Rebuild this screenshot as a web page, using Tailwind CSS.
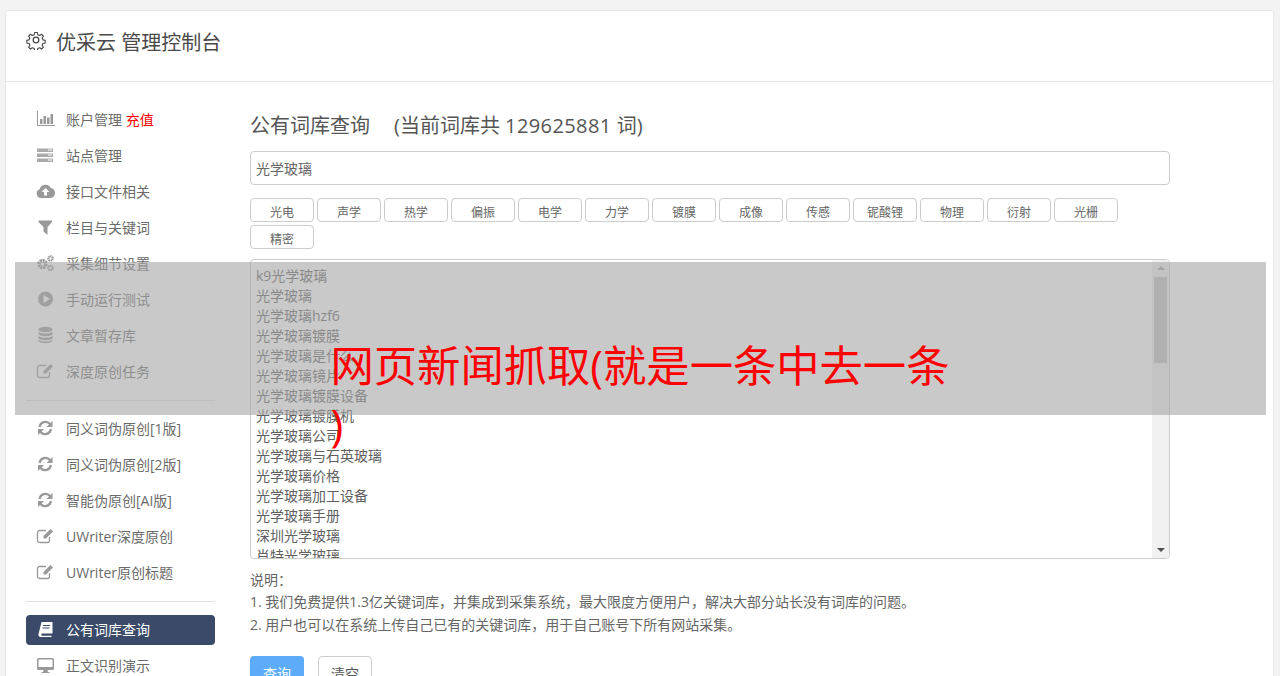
<!DOCTYPE html>
<html lang="zh">
<head>
<meta charset="utf-8">
<script src="https://cdn.jsdelivr.net/npm/@tailwindcss/browser@4"></script>
</head>
<body class="h-[676px] overflow-hidden bg-[#f3f3f3] font-['Open_Sans','Noto_Sans_CJK_SC',sans-serif] text-[14px] text-[#6b6b6b]">
<div class="relative h-[676px] overflow-hidden pl-[5px] pr-[6px] pt-[10px]">
  <div class="h-[800px] rounded-[3px] border border-[#e7e7e7] bg-white">
    <header class="flex h-[71px] items-start gap-[10px] border-b border-[#e5e5e5] pl-[20px] pt-[20px] text-[20px] leading-[24px] text-[#4a4a4a]">
      <svg class="mt-[-1px] h-[20px] w-[20px]" viewBox="0 0 24 24" fill="none" stroke="#444" stroke-width="1.500" stroke-linejoin="round"><circle cx="12" cy="12" r="3.400"/><path d="M10.200 2h3.600l.6 3 2.400 1 2.600-1.700 2.500 2.500-1.700 2.600 1 2.400 3 .6v3.600l-3 .6-1 2.400 1.700 2.600-2.500 2.500-2.600-1.700-2.400 1-.6 3h-3.600l-.6-3-2.400-1-2.600 1.700-2.500-2.500 1.700-2.600-1-2.400-3-.6v-3.600l3-.6 1-2.400-1.700-2.600 2.500-2.500 2.600 1.700 2.400-1z" transform="translate(1.200 1.200) scale(.9)"/></svg>
      <span>优采云 管理控制台</span>
    </header>
    <div class="flex">
      <nav class="w-[210px] shrink-0 pl-[20px] pr-[1px] pt-[20px]">
        <ul class="flex flex-col gap-[6px] py-[3px]">
          <li class="flex h-[30px] items-center rounded-[4px] pb-[2px] pl-[10px]"><svg class="mr-[11px] h-[18px] w-[19px]" viewBox="0 0 19 18" fill="#999"><path d="M1 1h1v14h17v1H1z"/><rect x="4" y="9" width="2.500" height="5"/><rect x="7.500" y="6" width="2.500" height="8"/><rect x="11" y="7.500" width="2.500" height="6.500"/><rect x="14.500" y="4" width="2.500" height="10"/></svg><span>账户管理 <span class="text-[#f00]">充值</span></span></li>
          <li class="flex h-[30px] items-center rounded-[4px] pb-[2px] pl-[10px]"><svg class="mr-[11px] h-[18px] w-[19px]" viewBox="0 0 19 18" fill="#aaa"><rect x="1" y="2.500" width="16" height="3.500"/><rect x="1" y="7.500" width="16" height="3.500"/><rect x="1" y="12.500" width="16" height="3.500"/><rect x="12" y="3.500" width="4" height="1" fill="#fff"/><rect x="12" y="8.500" width="4" height="1" fill="#fff"/><rect x="12" y="13.500" width="4" height="1" fill="#fff"/></svg><span>站点管理</span></li>
          <li class="flex h-[30px] items-center rounded-[4px] pb-[2px] pl-[10px]"><svg class="mr-[11px] h-[18px] w-[19px]" viewBox="0 0 19 18"><path fill="#999" d="M5 16a4.500 4.500 0 0 1-1.400-8.700A6 6 0 0 1 14.700 6a5.100 5.100 0 0 1 .3 10z"/><path fill="#fff" d="M9.500 6l4 4h-2.500v3.500H8V10H5.500z"/></svg><span>接口文件相关</span></li>
          <li class="flex h-[30px] items-center rounded-[4px] pb-[2px] pl-[10px]"><svg class="mr-[11px] h-[18px] w-[19px]" viewBox="0 0 19 18" fill="#999"><path d="M2.500 2.500h13.500v1.500L11.500 9v8l-4-3.500V9L2.500 4z"/></svg><span>栏目与关键词</span></li>
          <li class="flex h-[30px] items-center rounded-[4px] pb-[2px] pl-[10px]"><svg class="mr-[11px] h-[18px] w-[19px]" viewBox="0 0 19 18" fill="none" stroke="#999"><circle cx="6.500" cy="10" r="3.400" stroke-width="3.600" stroke-dasharray="2 .6"/><circle cx="14.500" cy="4.500" r="2.200" stroke-width="2.200" stroke-dasharray="1.300 .5"/><circle cx="14.500" cy="14" r="2.200" stroke-width="2.200" stroke-dasharray="1.300 .5"/></svg><span>采集细节设置</span></li>
          <li class="flex h-[30px] items-center rounded-[4px] pb-[2px] pl-[10px]"><svg class="mr-[11px] h-[18px] w-[19px]" viewBox="0 0 19 18"><circle cx="9.500" cy="9" r="7.500" fill="#999"/><path fill="#fff" d="M7.500 5L14 9l-6.500 4z"/></svg><span>手动运行测试</span></li>
          <li class="flex h-[30px] items-center rounded-[4px] pb-[2px] pl-[10px]"><svg class="mr-[11px] h-[18px] w-[19px]" viewBox="0 0 19 18" fill="#999"><ellipse cx="9.500" cy="3.500" rx="7" ry="2.800"/><path d="M2.500 5.300c1 3 13 3 14 0v2.700c-1 3-13 3-14 0z"/><path d="M2.500 9.500c1 3 13 3 14 0v2.400c-1 3-13 3-14 0z"/><path d="M2.500 13.300c1 3 13 3 14 0v1.200c-1 3.500-13 3.500-14 0z"/></svg><span>文章暂存库</span></li>
          <li class="flex h-[30px] items-center rounded-[4px] pb-[2px] pl-[10px]"><svg class="mr-[11px] h-[18px] w-[19px]" viewBox="0 0 19 18"><path fill="none" stroke="#999" stroke-width="1.300" d="M13.500 10v3.500a2 2 0 0 1-2 2h-8a2 2 0 0 1-2-2v-8a2 2 0 0 1 2-2H10"/><path fill="#999" d="M14.500 2l2.500 2.500-7 7H7.500V9z"/></svg><span>深度原创任务</span></li>
        </ul>
        <div class="my-[10px] h-px bg-[#e0e0e0]"></div>
        <ul class="flex flex-col gap-[6px] py-[3px]">
          <li class="flex h-[30px] items-center rounded-[4px] pb-[2px] pl-[10px]"><svg class="mr-[11px] h-[18px] w-[19px]" viewBox="0 0 19 18" fill="none" stroke="#999" stroke-width="2.200"><path d="M3.500 8a6 6 0 0 1 10.500-3l1.500 1.500"/><path d="M15 10a6 6 0 0 1-10.500 3L3 11.500"/><path fill="#999" stroke="none" d="M16.500 2v6h-6zM2 16v-6h6z"/></svg><span>同义词伪原创[1版]</span></li>
          <li class="flex h-[30px] items-center rounded-[4px] pb-[2px] pl-[10px]"><svg class="mr-[11px] h-[18px] w-[19px]" viewBox="0 0 19 18" fill="none" stroke="#999" stroke-width="2.200"><path d="M3.500 8a6 6 0 0 1 10.500-3l1.500 1.500"/><path d="M15 10a6 6 0 0 1-10.500 3L3 11.500"/><path fill="#999" stroke="none" d="M16.500 2v6h-6zM2 16v-6h6z"/></svg><span>同义词伪原创[2版]</span></li>
          <li class="flex h-[30px] items-center rounded-[4px] pb-[2px] pl-[10px]"><svg class="mr-[11px] h-[18px] w-[19px]" viewBox="0 0 19 18" fill="none" stroke="#999" stroke-width="2.200"><path d="M3.500 8a6 6 0 0 1 10.500-3l1.500 1.500"/><path d="M15 10a6 6 0 0 1-10.500 3L3 11.500"/><path fill="#999" stroke="none" d="M16.500 2v6h-6zM2 16v-6h6z"/></svg><span>智能伪原创[AI版]</span></li>
          <li class="flex h-[30px] items-center rounded-[4px] pb-[2px] pl-[10px]"><svg class="mr-[11px] h-[18px] w-[19px]" viewBox="0 0 19 18"><path fill="none" stroke="#999" stroke-width="1.300" d="M13.500 10v3.500a2 2 0 0 1-2 2h-8a2 2 0 0 1-2-2v-8a2 2 0 0 1 2-2H10"/><path fill="#999" d="M14.500 2l2.500 2.500-7 7H7.500V9z"/></svg><span>UWriter深度原创</span></li>
          <li class="flex h-[30px] items-center rounded-[4px] pb-[2px] pl-[10px]"><svg class="mr-[11px] h-[18px] w-[19px]" viewBox="0 0 19 18"><path fill="none" stroke="#999" stroke-width="1.300" d="M13.500 10v3.500a2 2 0 0 1-2 2h-8a2 2 0 0 1-2-2v-8a2 2 0 0 1 2-2H10"/><path fill="#999" d="M14.500 2l2.500 2.500-7 7H7.500V9z"/></svg><span>UWriter原创标题</span></li>
        </ul>
        <div class="my-[10px] h-px bg-[#e0e0e0]"></div>
        <ul class="flex flex-col gap-[6px] py-[3px]">
          <li class="flex h-[30px] items-center rounded-[4px] bg-[#3a4a68] pb-[2px] pl-[10px] text-white"><svg class="mr-[11px] h-[18px] w-[19px]" viewBox="0 0 19 18" fill="#fff"><path d="M5.500 2H16.500v11.500H6a1.300 1.300 0 0 0 0 2.300H15.500V17H4.500C3 17 2 15.500 2.500 14z"/><rect x="7" y="5" width="7" height="1" fill="#3a4a68"/><rect x="6.500" y="7.500" width="7" height="1" fill="#3a4a68"/></svg><span>公有词库查询</span></li>
          <li class="flex h-[30px] items-center rounded-[4px] pb-[2px] pl-[10px]"><svg class="mr-[11px] h-[18px] w-[19px]" viewBox="0 0 19 18" fill="#999"><path d="M2.500 2h14A1.500 1.500 0 0 1 18 3.500v9a1.500 1.500 0 0 1-1.500 1.500h-5l.5 2h1.500v1h-8v-1H7l.5-2h-5A1.500 1.500 0 0 1 1 12.500v-9A1.500 1.500 0 0 1 2.500 2z"/><rect x="2.500" y="3.500" width="14" height="7.500" fill="#fff"/></svg><span>正文识别演示</span></li>
        </ul>
      </nav>
      <main class="w-[954px] shrink-0 pl-[34px] pt-[29px]">
        <h2 class="flex text-[20px] leading-[30px] text-[#555]"><span>公有词库查询</span><span class="ml-[24px]">(当前词库共 <span class="tracking-[0.4px]">129625881</span> 词)</span></h2>
        <div class="mt-[10px] flex h-[34px] items-center rounded-[4px] border border-[#ccc] pl-[5px] text-[#666]">光学玻璃</div>
        <div class="mt-[13px] flex flex-wrap gap-[3px] text-[12px] leading-[27px] text-[#666]">
          <span class="h-[24px] w-[64px] rounded-[4px] border border-[#ccc] text-center">光电</span>
          <span class="h-[24px] w-[64px] rounded-[4px] border border-[#ccc] text-center">声学</span>
          <span class="h-[24px] w-[64px] rounded-[4px] border border-[#ccc] text-center">热学</span>
          <span class="h-[24px] w-[64px] rounded-[4px] border border-[#ccc] text-center">偏振</span>
          <span class="h-[24px] w-[64px] rounded-[4px] border border-[#ccc] text-center">电学</span>
          <span class="h-[24px] w-[64px] rounded-[4px] border border-[#ccc] text-center">力学</span>
          <span class="h-[24px] w-[64px] rounded-[4px] border border-[#ccc] text-center">镀膜</span>
          <span class="h-[24px] w-[64px] rounded-[4px] border border-[#ccc] text-center">成像</span>
          <span class="h-[24px] w-[64px] rounded-[4px] border border-[#ccc] text-center">传感</span>
          <span class="h-[24px] w-[64px] rounded-[4px] border border-[#ccc] text-center">铌酸锂</span>
          <span class="h-[24px] w-[64px] rounded-[4px] border border-[#ccc] text-center">物理</span>
          <span class="h-[24px] w-[64px] rounded-[4px] border border-[#ccc] text-center">衍射</span>
          <span class="h-[24px] w-[64px] rounded-[4px] border border-[#ccc] text-center">光栅</span>
          <span class="h-[24px] w-[64px] rounded-[4px] border border-[#ccc] text-center">精密</span>
        </div>
        <div class="mt-[10px] flex h-[300px] overflow-hidden rounded-[4px] border border-[#ccc] text-[#606060]">
          <div class="flex-1 overflow-hidden pl-[5px] pt-[6px] leading-[20px]">
            <p>k9光学玻璃</p><p>光学玻璃</p><p>光学玻璃hzf6</p><p>光学玻璃镀膜</p><p>光学玻璃是什么</p><p>光学玻璃镜片</p><p>光学玻璃镀膜设备</p><p>光学玻璃镀膜机</p><p>光学玻璃公司</p><p>光学玻璃与石英玻璃</p><p>光学玻璃价格</p><p>光学玻璃加工设备</p><p>光学玻璃手册</p><p>深圳光学玻璃</p><p>肖特光学玻璃</p>
          </div>
          <div class="flex w-[17px] flex-col items-center bg-[#f1f1f1]">
            <svg class="mt-[6px] h-[4px] w-[8px]" viewBox="0 0 8 4" fill="#a3a3a3"><path d="M4 0l4 4H0z"/></svg>
            <div class="mt-[7px] h-[86px] w-[13px] bg-[#c1c1c1]"></div>
            <svg class="mt-auto mb-[6px] h-[4px] w-[8px]" viewBox="0 0 8 4" fill="#505050"><path d="M0 0h8L4 4z"/></svg>
          </div>
        </div>
        <div class="mt-[9px] leading-[23px] text-[#666]">
          <p class="h-[22px]">说明：</p>
          <p>1. 我们免费提供1.3亿关键词库，并集成到采集系统，最大限度方便用户，解决大部分站长没有词库的问题。</p>
          <p>2. 用户也可以在系统上传自己已有的关键词库，用于自己账号下所有网站采集。</p>
        </div>
        <div class="mt-[20px] flex gap-[14px]">
          <span class="flex h-[34px] w-[54px] items-center justify-center rounded-[4px] bg-[#5cacfa] text-white">查询</span>
          <span class="flex h-[34px] w-[54px] items-center justify-center rounded-[4px] border border-[#ccc] text-[#555]">清空</span>
        </div>
      </main>
    </div>
  </div>
  <div class="absolute left-[15px] top-[262px] flex h-[153px] w-[1251px] justify-center bg-[#a5a5a5]/60 pt-[74px]">
    <div class="w-[620px] text-[43.300px] leading-[59px] text-[#f00]">网页新闻抓取(就是一条中去一条<br>)</div>
  </div>
</div>
</body>
</html>
